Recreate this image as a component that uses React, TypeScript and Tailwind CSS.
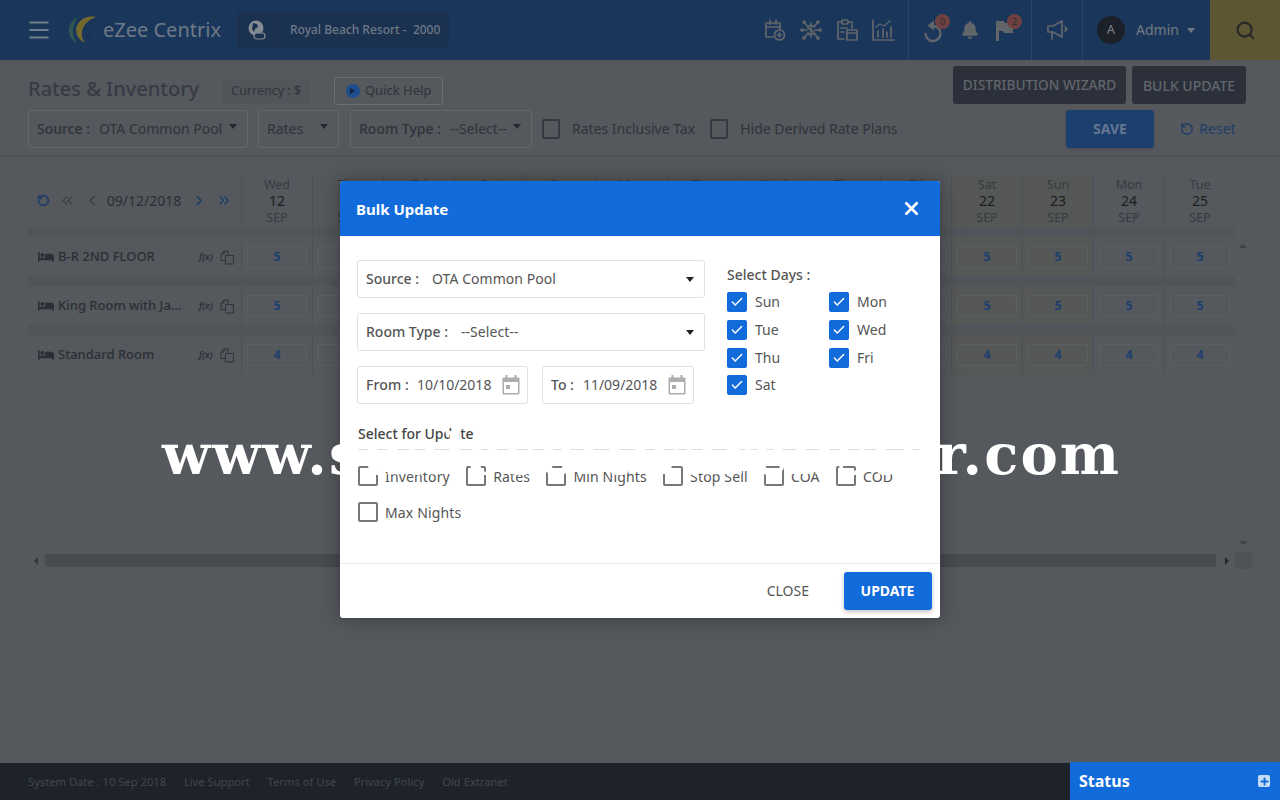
import React from "react";
import { Menu, Search, RotateCcw, ChevronLeft, ChevronRight, ChevronsLeft, ChevronsRight, X, Check, Plus } from "lucide-react";
import { FaBed, FaBell } from "react-icons/fa";

const days = [
  ["Wed", "12"], ["Thu", "13"], ["Fri", "14"], ["Sat", "15"], ["Sun", "16"], ["Mon", "17"], ["Tue", "18"],
  ["Wed", "19"], ["Thu", "20"], ["Fri", "21"], ["Sat", "22"], ["Sun", "23"], ["Mon", "24"], ["Tue", "25"],
];
const rooms = [["B-R 2ND FLOOR", "5"], ["King Room with Ja...", "5"], ["Standard Room", "4"]];

function Caret({ color = "border-t-[#25282e]" }: { color?: string }) {
  return <span className={`inline-block w-0 h-0 border-x-[4.5px] border-t-[5px] border-x-transparent ${color}`} />;
}

function Logo() {
  return (
    <svg width="30" height="28" viewBox="0 0 30 28" fill="none" className="shrink-0">
      <path d="M10 1C2 5-1 13 2 20c1 3 4 6 7 7C4 21 3 10 10 1Z" fill="#2f5650" />
      <path d="M28 1C17-1 9 5 8 14c0 5 3 10 9 13C11 20 13 6 28 1Z" fill="#75692e" />
      <path d="M27 9c-6 1-10 6-10 11 0 3 3 6 9 7-5-3-6-11 1-18Z" fill="#1a3357" />
    </svg>
  );
}

function TopIcon({ children }: { children: React.ReactNode }) {
  return (
    <svg width="24" height="24" viewBox="0 0 24 24" fill="none" stroke="#62666b" strokeWidth="1.7" strokeLinecap="round" strokeLinejoin="round" className="shrink-0">
      {children}
    </svg>
  );
}

function TbSelect({ label, value, w }: { label?: string; value: string; w: string }) {
  return (
    <div className={`flex items-center h-[38px] border border-[#63666b] rounded-[3px] pl-[8px] pb-[2px] text-[14px] text-[#2f333a] ${w}`}>
      {label && <span className="font-medium mr-[9px] whitespace-nowrap">{label}</span>}
      <span className="whitespace-nowrap">{value}</span>
      <span className="ml-auto mr-[10px] -mt-[4px] flex"><Caret /></span>
    </div>
  );
}

function DimBox() {
  return <span className="w-[18px] h-[20px] rounded-[2px] border-2 border-[#35393f] shrink-0" />;
}

function CopyIcon() {
  return (
    <svg width="15" height="15" viewBox="0 0 15 15" fill="none" stroke="#2f3339" strokeWidth="1" className="shrink-0">
      <path d="M1 10.500V4l3-3h4v4" />
      <path d="M1 10.500h4.500" />
      <path d="M5.500 5.500h8V14h-8Z" />
      <path d="M1 4h3V1" />
    </svg>
  );
}

function Dropdown({ label, value }: { label: string; value: string }) {
  return (
    <div className="flex items-center h-[38px] border border-[#dfe1e7] rounded-[3px] pl-[8px] pr-[10px] pb-[2px] text-[14px] text-[#555]">
      <span className="font-medium whitespace-nowrap">{label}</span>
      <span className="whitespace-nowrap ml-[13px] tracking-[0.05px]">{value}</span>
      <span className="ml-auto flex mt-[2px]"><Caret color="border-t-[#222]" /></span>
    </div>
  );
}

function CalIcon() {
  return (
    <svg width="18" height="20" viewBox="0 0 18 20" fill="none" className="shrink-0">
      <rect x="0.500" y="2.500" width="17" height="17" rx="1" fill="#aeaeae" />
      <rect x="2" y="7" width="14" height="11" fill="#fff" />
      <rect x="3.500" y="0" width="2" height="4" fill="#aeaeae" />
      <rect x="12.500" y="0" width="2" height="4" fill="#aeaeae" />
      <rect x="4" y="10" width="4" height="4" fill="#aeaeae" />
    </svg>
  );
}

function DayCheck({ label }: { label: string }) {
  return (
    <div className="flex items-start text-[14px] text-[#555]">
      <span className="w-[20px] h-[20px] bg-[#126bdb] rounded-[2px] flex items-center justify-center">
        <Check size={14} color="#fff" strokeWidth={2.5} />
      </span>
      <span className="ml-[8px] leading-[20px]">{label}</span>
    </div>
  );
}

function UpdateCheck({ label }: { label: string }) {
  return (
    <div className="flex items-center h-[20px] text-[14px] tracking-[0.15px] text-[#555] whitespace-nowrap">
      <span className="w-[20px] h-[20px] border-2 border-[#777] rounded-[2px]" />
      <span className="ml-[7px]">{label}</span>
    </div>
  );
}

export default function App() {
  return (
    <div className="relative w-[1280px] h-[800px] overflow-hidden bg-[#55585d] flex flex-col font-['Noto_Sans',sans-serif]">
      {/* top bar */}
      <header className="h-[60px] bg-[#1a375b] flex items-center shrink-0">
        <Menu size={26} color="#748090" strokeWidth={1.9} className="ml-[26px]" />
        <div className="ml-[16px]"><Logo /></div>
        <span className="ml-[5px] text-[20px] text-[#6f7a88]">eZee Centrix</span>
        <div className="ml-[16px] h-[36px] w-[212px] bg-[#1b3150] rounded-[3px] flex items-center">
          <div className="w-[41px] h-full flex items-center justify-center border-r border-[#1a2e4a]">
            <svg width="18" height="20" viewBox="0 0 18 20">
              <circle cx="8" cy="8" r="7.500" fill="#858b93" />
              <path d="M5 3l4 1 1 3-3 2-1 3-2-3Z" fill="#1b3150" />
              <rect x="6" y="13" width="11" height="6" rx="3" fill="#1b3150" stroke="#858b93" strokeWidth="1.200" />
            </svg>
          </div>
          <span className="ml-[12px] text-[12px] font-medium text-[#6f7a88] whitespace-pre">Royal Beach Resort -  2000</span>
        </div>

        <div className="ml-auto flex items-center h-full">
          <div className="flex items-center gap-[12px] pr-[13px] h-full">
            <TopIcon>
              <path d="M10 19H3V5h14v6" /><path d="M3 9h14" /><path d="M7 2v4M13 2v4" />
              <circle cx="16.500" cy="17" r="5" /><path d="M16.500 15v4M14.500 17h4" />
            </TopIcon>
            <TopIcon>
              <path d="M12 5v14M15 8.500c-1-1.500-6-1.500-6 1 0 3 6 2 6 5 0 2.500-5 2.500-6 1" />
              <path d="M5 4l4 5M19 4l-4 5M3 12h5M21 12h-5M5 20l4-5M19 20l-4-5" />
              <circle cx="5" cy="4" r="1" fill="#62666b" /><circle cx="19" cy="4" r="1" fill="#62666b" />
              <circle cx="3" cy="12" r="1" fill="#62666b" /><circle cx="21" cy="12" r="1" fill="#62666b" />
              <circle cx="5" cy="20" r="1" fill="#62666b" /><circle cx="19" cy="20" r="1" fill="#62666b" />
            </TopIcon>
            <TopIcon>
              <path d="M9 21H3V4h4M13 4h4v6" /><rect x="7" y="2" width="6" height="4" rx="1" />
              <path d="M6 10h6M6 14h3" /><rect x="12" y="12" width="10" height="10" />
              <path d="M12 15h10" />
            </TopIcon>
            <TopIcon>
              <path d="M2 2v20h21" /><path d="M7 19v-6M12 19v-8M16 19v-5M20 19V9" />
              <path d="M5 9l4-3 4 2 6-5" strokeWidth="1.200" />
            </TopIcon>
          </div>
          <div className="flex items-center border-l border-[#2a4666] h-full pl-[13px] pr-[13px] gap-[12px]">
            <div className="relative w-[24px] h-[24px]">
              <svg width="24" height="24" viewBox="0 0 24 24" fill="none" className="mt-[1px]">
                <path d="M11 7a7.500 7.500 0 1 1-7.500 8" stroke="#62666b" strokeWidth="2.400" strokeLinecap="round" />
                <path d="M12 1.500v10L5.500 6.500Z" fill="#62666b" />
              </svg>
              <span className="absolute -top-[4px] left-[13px] w-[15px] h-[15px] rounded-full bg-[#6f4141] text-[#2b2b2b] text-[9px] flex items-center justify-center">0</span>
            </div>
            <div className="w-[24px] flex justify-center"><FaBell size={18} color="#62666b" /></div>
            <div className="relative w-[24px] h-[24px]">
              <svg width="20" height="22" viewBox="0 0 20 22" className="mt-[1px]">
                <path d="M2 2h8l1 2h8v10h-9l-1-2H5v10H2Z" fill="#62666b" />
              </svg>
              <span className="absolute -top-[4px] left-[13px] w-[15px] h-[15px] rounded-full bg-[#6f4141] text-[#2b2b2b] text-[9px] flex items-center justify-center">2</span>
            </div>
          </div>
          <div className="flex items-center border-l border-[#2a4666] h-full pl-[14px] pr-[12px]">
            <TopIcon>
              <path d="M2 8h5l9-5v16l-9-5H2Z" /><path d="M6 14v7" /><path d="M19 9l2 2-2 2" fill="#62666b" />
            </TopIcon>
          </div>
          <div className="flex items-center border-l border-[#2a4666] h-full pl-[14px] w-[128px]">
            <span className="w-[28px] h-[28px] rounded-full bg-[#1b2029] text-[#7a8088] text-[13px] flex items-center justify-center">A</span>
            <span className="ml-[11px] text-[14px] text-[#737982] pb-[2px]">Admin</span>
            <span className="ml-[8px] flex"><Caret color="border-t-[#737982]" /></span>
          </div>
          <div className="w-[70px] h-full bg-[#5c5632] flex items-center justify-center">
            <Search size={21} color="#26282a" strokeWidth={2.4} />
          </div>
        </div>
      </header>

      {/* toolbar */}
      <section className="h-[97px] shrink-0 border-b-2 border-[#505358] flex justify-between pl-[28px] pr-[34px]">
        <div className="pt-[17px]">
          <div className="flex items-center h-[28px]">
            <h1 className="text-[20px] font-medium text-[#363b45] whitespace-nowrap pb-[4px]">Rates &amp; Inventory</h1>
            <span className="ml-[23px] h-[25px] w-[88px] bg-[#52555a] rounded-[3px] flex items-center justify-center text-[12.500px] text-[#2f333a]">Currency : $</span>
            <span className="ml-[24px] h-[28px] w-[109px] border border-[#6b6e73] rounded-[3px] flex items-center justify-center text-[13px] text-[#2f333a]">
              <span className="w-[14px] h-[14px] rounded-full bg-[#1d4f8f] flex items-center justify-center mr-[5px]">
                <span className="w-0 h-0 border-y-[3px] border-l-[5px] border-y-transparent border-l-[#16243a]" />
              </span>
              Quick Help
            </span>
          </div>
          <div className="flex items-center mt-[5px]">
            <TbSelect label="Source :" value="OTA Common Pool" w="w-[220px]" />
            <div className="ml-[10px]"><TbSelect value="Rates" w="w-[81px]" /></div>
            <div className="ml-[11px]"><TbSelect label="Room Type :" value="--Select--" w="w-[182px]" /></div>
            <div className="ml-[10px] flex items-center text-[14px] text-[#2f333a]">
              <DimBox /><span className="ml-[12px] whitespace-nowrap pb-[2px]">Rates Inclusive Tax</span>
            </div>
            <div className="ml-[15px] flex items-center text-[14px] text-[#2f333a]">
              <DimBox /><span className="ml-[12px] whitespace-nowrap pb-[2px]">Hide Derived Rate Plans</span>
            </div>
          </div>
        </div>
        <div className="pt-[6px] flex flex-col items-end">
          <div className="flex gap-[6px]">
            <span className="h-[38px] w-[173px] bg-[#2b303a] rounded-[3px] flex items-center justify-center text-[13.700px] font-medium text-[#62666c]">DISTRIBUTION WIZARD</span>
            <span className="h-[38px] w-[114px] bg-[#2b303a] rounded-[3px] flex items-center justify-center text-[14px] font-medium text-[#62666c]">BULK UPDATE</span>
          </div>
          <div className="flex gap-[16px] mt-[6px]">
            <span className="h-[38px] w-[88px] bg-[#1b406e] rounded-[3px] shadow-sm pb-[1px] flex items-center justify-center text-[14px] font-bold text-[#647590]">SAVE</span>
            <span className="h-[38px] w-[76px] bg-[#56595e] rounded-[3px] pb-[2px] flex items-center justify-center text-[14px] text-[#1b3d66]">
              <RotateCcw size={14} color="#1b3d66" strokeWidth={2.500} className="mr-[5px] mt-[2px]" />Reset
            </span>
          </div>
        </div>
      </section>

      {/* grid */}
      <section className="pt-[17px] pl-[28px] relative">
        <div className="w-[1207px] grid grid-cols-[213px_repeat(14,71px)] grid-rows-[53px_repeat(3,39px)] gap-y-[10px] bg-[#515459]">
          <div className="bg-[#55585d] flex items-center pl-[9px] pr-[9px]">
            <RotateCcw size={15} color="#1b3d66" strokeWidth={3} />
            <ChevronsLeft size={19} color="#3c4046" className="ml-[9px]" />
            <ChevronLeft size={19} color="#3c4046" className="ml-[9px]" />
            <span className="ml-[6px] text-[14px] text-[#2b2f35] pb-[1px]">09/12/2018</span>
            <ChevronRight size={19} color="#1b3d66" className="ml-[10px]" />
            <ChevronsRight size={19} color="#1b3d66" className="ml-[8px]" />
          </div>
          {days.map(([d, n], i) => (
            <div key={i} className={`flex flex-col items-center justify-center pt-[2px] border-l border-[#4d5055] leading-[16.500px] ${d === "Sat" || d === "Sun" ? "bg-[#555856]" : "bg-[#55585d]"}`}>
              <span className="text-[12.500px] text-[#373b42]">{d}</span>
              <span className="text-[14px] text-[#1b1e23]">{n}</span>
              <span className="text-[12.500px] text-[#373b42]">SEP</span>
            </div>
          ))}
          {rooms.map(([name, v]) => (
            <React.Fragment key={name}>
              <div className="bg-[#55585d] flex items-center pl-[10px] text-[#2b2f35]">
                <FaBed size={16} color="#2b2f35" className="shrink-0" />
                <span className="ml-[4px] w-[125px] whitespace-nowrap text-[13px] font-medium pt-[1px]">{name}</span>
                <span className="ml-[16px] text-[9px] italic font-semibold pt-[1px]">f(x)</span>
                <span className="ml-[7px] pt-[1px]"><CopyIcon /></span>
              </div>
              {days.map(([d], i) => (
                <div key={i} className={`flex items-center justify-center border-l border-[#4d5055] ${d === "Sat" || d === "Sun" ? "bg-[#555856]" : "bg-[#55585d]"}`}>
                  <span className="w-[60px] h-[22px] border border-[#5c5f64] rounded-[2px] pt-[1px] flex items-center justify-center text-[12.500px] font-bold text-[#1d3f6e]">{v}</span>
                </div>
              ))}
            </React.Fragment>
          ))}
        </div>
        <span className="absolute left-[1239px] top-[87px] w-0 h-0 border-x-[4px] border-b-[4px] border-x-transparent border-b-[#3f4247]" />
        <span className="absolute left-[1239px] top-[384px] w-0 h-0 border-x-[4px] border-t-[4px] border-x-transparent border-t-[#3f4247]" />
        <div className="mt-[178px] flex items-center h-[17px] -ml-[28px]">
          <span className="ml-[34px] w-0 h-0 border-y-[4px] border-r-[4px] border-y-transparent border-r-[#33363b]" />
          <div className="ml-[7px] h-[13px] w-[1171px] bg-[#484b50]" />
          <span className="ml-[9px] w-0 h-0 border-y-[4px] border-l-[4px] border-y-transparent border-l-[#25282c]" />
          <div className="ml-[6px] h-[17px] w-[17px] bg-[#4f5257]" />
        </div>
      </section>

      {/* footer */}
      <footer className="mt-auto h-[37px] bg-[#1e2229] flex items-center pl-[28px] pt-[1px] text-[11.200px] text-[#42474e] gap-[17.800px] relative">
        <span>System Date : 10 Sep 2018</span>
        <span>Live Support</span>
        <span>Terms of Use</span>
        <span>Privacy Policy</span>
        <span>Old Extranet</span>
        <div className="absolute right-0 bottom-0 w-[210px] h-[38px] bg-[#126bdb] flex items-center pl-[9px] pr-[10px]">
          <span className="text-[16px] font-bold text-white">Status</span>
          <span className="ml-auto w-[12px] h-[12px] rounded-[2px] bg-[#c6dcf7] flex items-center justify-center">
            <Plus size={11} color="#126bdb" strokeWidth={4} />
          </span>
        </div>
      </footer>

      {/* modal */}
      <div className="absolute left-[340px] top-[181px] w-[600px] h-[437px] bg-white rounded-[3px] shadow-[0_0_20px_rgba(0,0,0,0.35)] flex flex-col overflow-hidden">
        <div className="h-[55px] bg-[#126bdb] flex items-center justify-between pl-[16px] pr-[18px] shrink-0">
          <span className="text-[15px] font-bold text-white pt-[2px]">Bulk Update</span>
          <X size={21} color="#fff" strokeWidth={3} />
        </div>
        <div className="flex-1 pl-[17px] pr-[18px] pt-[24px]">
          <div className="flex">
            <div className="w-[348px]">
              <Dropdown label="Source :" value="OTA Common Pool" />
              <div className="mt-[15px]"><Dropdown label="Room Type :" value="--Select--" /></div>
              <div className="mt-[15px] flex gap-[14px]">
                <div className="w-[171px] h-[38px] border border-[#dfe1e7] rounded-[3px] flex items-center pl-[8px] pr-[7px] pb-[2px] text-[14px] text-[#555]">
                  <span className="font-medium tracking-[0.1px]">From :</span><span className="ml-[8px]">10/10/2018</span>
                  <span className="ml-auto mt-[2px]"><CalIcon /></span>
                </div>
                <div className="w-[152px] h-[38px] border border-[#dfe1e7] rounded-[3px] flex items-center pl-[8px] pr-[7px] pb-[2px] text-[14px] text-[#555]">
                  <span className="font-medium">To :</span><span className="ml-[9px]">11/09/2018</span>
                  <span className="ml-auto mt-[2px]"><CalIcon /></span>
                </div>
              </div>
            </div>
            <div className="ml-[22px] pt-[5px]">
              <div className="h-[20px] text-[14px] font-medium text-[#555] leading-[20px]">Select Days :</div>
              <div className="mt-[7px] grid grid-cols-[102px_80px] auto-rows-[27.800px]">
                {["Sun", "Mon", "Tue", "Wed", "Thu", "Fri", "Sat"].map((d) => <DayCheck key={d} label={d} />)}
              </div>
            </div>
          </div>
          <div className="mt-[20px] ml-[1px] h-[26px] border-b border-[#ddd] text-[14px] font-medium text-[#444] leading-[20px]">Select for Update</div>
          <div className="mt-[16px] ml-[1px] flex flex-wrap gap-x-[16.300px] gap-y-[16px] w-[564px]">
            {["Inventory", "Rates", "Min Nights", "Stop Sell", "COA", "COD", "Max Nights"].map((l) => <UpdateCheck key={l} label={l} />)}
          </div>
        </div>
        <div className="h-[55px] shrink-0 border-t border-[#eee] flex items-center justify-end pr-[8px]">
          <span className="text-[14px] text-[#555] mr-[34px] pb-[2px] pr-[1px]">CLOSE</span>
          <span className="w-[88px] h-[38px] bg-[#126bdb] rounded-[3px] shadow-[0_2px_4px_rgba(0,0,0,0.25)] pb-[2px] pr-[1px] flex items-center justify-center text-[14px] font-bold text-white">UPDATE</span>
        </div>
      </div>

      {/* watermark */}
      <div className="absolute left-[162px] top-[419px] text-[56px] font-bold leading-[70px] tracking-[2.100px] text-white whitespace-nowrap pointer-events-none font-['DejaVu_Serif',serif]">
        www.sualesoftwarelister.com
      </div>
    </div>
  );
}
